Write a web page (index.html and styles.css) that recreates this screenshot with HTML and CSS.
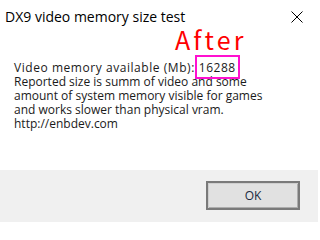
FILE: index.html
```html
<!DOCTYPE html>
<html>
<head>
<meta charset="utf-8">
<link rel="stylesheet" href="styles.css">
</head>
<body>
<div class="dialog">
  <div class="titlebar">
    <span class="title">DX9 video memory size test</span>
    <svg class="close" width="12" height="12" viewBox="0 0 12 12"><path d="M0.5 0.5 L11.5 11.5 M11.5 0.5 L0.5 11.5" stroke="#000" stroke-width="1" fill="none"/></svg>
  </div>
  <div class="content">
    <div class="annot">After</div>
    <p class="msg"><span class="l1">Video memory available (Mb):</span><span class="hl">16288</span><br>Reported size is summ of video and some<br>amount of system memory visible for games<br>and works slower than physical vram.<br>http://enbdev.com</p>
  </div>
  <div class="footer">
    <button class="ok">OK</button>
  </div>
</div>
</body>
</html>
```
FILE: styles.css
```css
html, body {
  margin: 0;
  padding: 0;
  background: #fff;
}
.dialog {
  width: 318px;
  height: 222px;
  display: flex;
  flex-direction: column;
  font-family: "Open Sans", "Noto Sans", sans-serif;
  color: #000;
}
.titlebar {
  height: 30px;
  display: flex;
  align-items: center;
  justify-content: space-between;
  padding: 0 15px 0 5px;
}
.title {
  font-size: 14px;
  margin-top: 2px;
}
.close {
  display: block;
  margin-top: 3px;
}
.content {
  position: relative;
  flex: 1;
  padding: 31px 0 0 14px;
}
.annot {
  position: absolute;
  left: 175px;
  top: -6px;
  font-family: "Noto Sans CJK JP", sans-serif;
  font-weight: 400;
  font-size: 25px;
  letter-spacing: 3.2px;
  color: #ff0000;
  line-height: 30px;
}
.msg {
  margin: 0;
  font-size: 12px;
  line-height: 14px;
  color: #1a1a1a;
}
.l1 {
  letter-spacing: 0.55px;
}
.hl {
  position: relative;
  margin-left: 4px;
  letter-spacing: 0.5px;
}
.hl::after {
  content: "";
  position: absolute;
  left: -4px;
  right: -4px;
  top: -4px;
  bottom: -3px;
  border: 2px solid #ff10d0;
}
.footer {
  height: 52px;
  background: #f0f0f0;
  display: flex;
  justify-content: flex-end;
  align-items: flex-start;
  padding: 11px 18px 0 0;
  box-sizing: border-box;
}
.ok {
  width: 94px;
  height: 29px;
  background: #e1e1e1;
  border: 2px solid #7a7a7a;
  box-shadow: inset 1px 1px 0 #cfcfcf, inset -1px -1px 0 #adadad;
  font-family: "Open Sans", "Noto Sans", sans-serif;
  font-size: 12px;
  color: #1a2a40;
  padding: 0;
}
```
